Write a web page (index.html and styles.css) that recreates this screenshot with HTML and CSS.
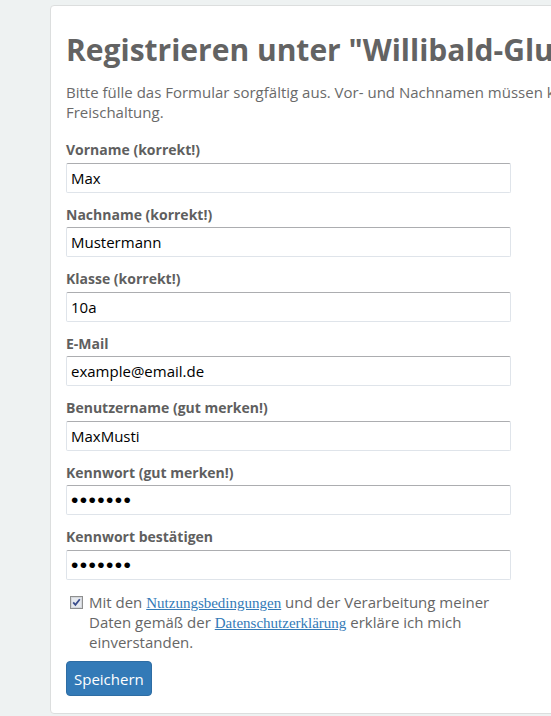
FILE: index.html
```html
<!DOCTYPE html>
<html lang="de">
<head>
<meta charset="utf-8">
<title>Registrieren</title>
<link rel="stylesheet" href="styles.css">
</head>
<body>
<main class="card">
  <h1 class="title">Registrieren unter "Willibald-Gluck-Gymnasium"</h1>
  <p class="intro">Bitte fülle das Formular sorgfältig aus. Vor- und Nachnamen müssen korrekt angegeben werden, sonst erfolgt keine<br>Freischaltung.</p>
  <form class="form">
    <div class="group">
      <label class="label" for="vn">Vorname (korrekt!)</label>
      <input class="input" id="vn" type="text" value="Max">
    </div>
    <div class="group">
      <label class="label" for="nn">Nachname (korrekt!)</label>
      <input class="input" id="nn" type="text" value="Mustermann">
    </div>
    <div class="group">
      <label class="label" for="kl">Klasse (korrekt!)</label>
      <input class="input" id="kl" type="text" value="10a">
    </div>
    <div class="group">
      <label class="label" for="em">E-Mail</label>
      <input class="input" id="em" type="text" value="example@email.de">
    </div>
    <div class="group">
      <label class="label" for="bn">Benutzername (gut merken!)</label>
      <input class="input" id="bn" type="text" value="MaxMusti">
    </div>
    <div class="group">
      <label class="label" for="pw">Kennwort (gut merken!)</label>
      <input class="input pw" id="pw" type="password" value="1234567">
    </div>
    <div class="group">
      <label class="label" for="pw2">Kennwort bestätigen</label>
      <input class="input pw" id="pw2" type="password" value="1234567">
    </div>
    <div class="check">
      <span class="box"><svg width="13" height="13" viewBox="0 0 13 13"><rect x="0.5" y="0.5" width="12" height="12" fill="#f4f4f4" stroke="#8e8f8f"/><rect x="1.5" y="1.5" width="10" height="10" fill="#e6e9ee" stroke="#d4d7dc"/><path d="M3.2 6.4 L5.4 8.8 L9.8 3.2" fill="none" stroke="#3a4d8c" stroke-width="1.8"/></svg></span>
      <span class="check-text">Mit den <a href="#">Nutzungsbedingungen</a> und der Verarbeitung meiner Daten gemäß der <a href="#">Datenschutzerklärung</a> erkläre ich mich einverstanden.</span>
    </div>
    <button class="btn" type="button">Speichern</button>
  </form>
</main>
</body>
</html>
```

FILE: styles.css
```css
html, body {
  overflow: hidden;
}
body {
  margin: 0;
  padding: 5px 0 0 50px;
  background: #eef2f2;
  font-family: "Open Sans", "Liberation Sans", sans-serif;
  font-size: 15px;
  line-height: 20px;
  color: #666;
}
.card {
  width: 900px;
  background: #fff;
  border: 1px solid #dcdede;
  border-radius: 4px;
  padding: 27px 16px 17px 15px;
}
.title {
  margin: 0 0 16px;
  font-size: 30px;
  line-height: 33px;
  font-weight: 700;
  color: #636363;
  white-space: nowrap;
}
.intro {
  margin: 0 0 18px;
  color: #6a6a6a;
}
.form {
  width: 445px;
}
.group {
  margin-bottom: 12px;
}
.label {
  display: block;
  font-size: 14px;
  font-weight: 700;
  color: #5f5f5f;
  margin-bottom: 2.5px;
}
.input {
  display: block;
  box-sizing: border-box;
  width: 100%;
  height: 30px;
  margin: 0;
  padding: 0 4px;
  border: 1px solid #dfe4ea;
  border-top-color: #acadb0;
  border-radius: 2px;
  background: #fff;
  font-family: "Open Sans", "Liberation Sans", sans-serif;
  font-size: 15px;
  color: #000;
  outline: none;
}
.pw {
  font-family: "Liberation Sans", sans-serif;
  font-size: 21px;
  letter-spacing: 1.4px;
}
.check {
  display: flex;
  align-items: flex-start;
  margin: 11px 0 9px;
  line-height: 20.3px;
}
.box {
  flex: none;
  display: block;
  width: 13px;
  height: 13px;
  margin: 4px 6px 0 4px;
}
.box svg {
  display: block;
}
.check-text {
  color: #666;
}
.check-text a {
  font-family: "Liberation Serif", serif;
  font-size: 15px;
  line-height: 1;
  color: #337ab7;
  text-decoration: underline;
}
.btn {
  display: block;
  box-sizing: border-box;
  height: 35px;
  padding: 0 7px;
  border: 1px solid #2e6da4;
  border-radius: 4px;
  background: #337ab7;
  color: #fff;
  font-family: "Open Sans", "Liberation Sans", sans-serif;
  font-size: 15px;
}
```
